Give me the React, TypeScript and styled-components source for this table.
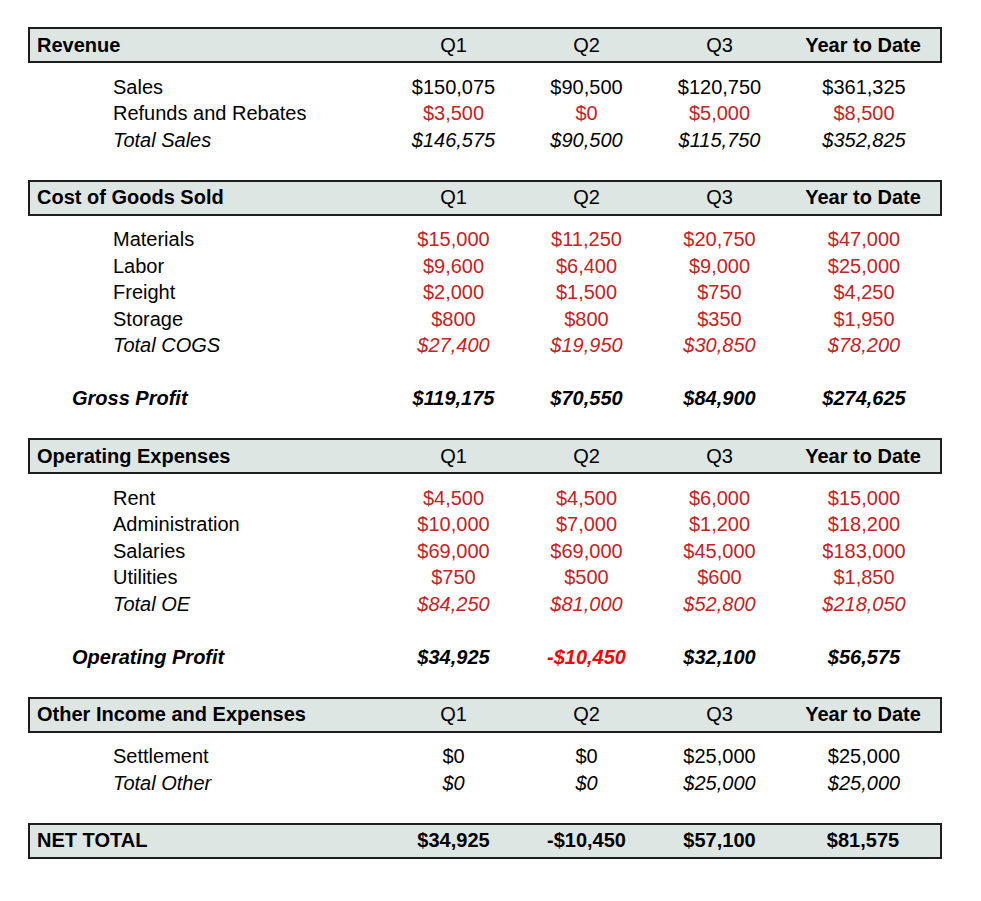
import React from "react";
import styled, { createGlobalStyle, css } from "styled-components";

const Global = createGlobalStyle`
  html, body { margin: 0; padding: 0; background: #ffffff; }
  body { font-family: "Liberation Sans", Arial, sans-serif; color: #000; }
`;

const Sheet = styled.div`
  padding: 27px 0 0 28px;
  width: 914px;
  font-size: 20px;
`;

const Section = styled.section`
  display: flex;
  flex-direction: column;
`;

const cols = css`
  display: grid;
  grid-template-columns: 359px 133px 133px 133px 156px;
  align-items: center;
`;

const HeaderBox = styled.div`
  ${cols}
  grid-template-columns: 357px 133px 133px 133px 154px;
  box-sizing: border-box;
  height: 36px;
  background: #dee6e4;
  border: 2px solid #1e1e1e;
  margin-bottom: 10.5px;
`;

const HeaderLabel = styled.div`
  font-weight: bold;
  padding-left: 7px;
  white-space: nowrap;
`;

const HeaderCell = styled.div<{ $bold?: boolean }>`
  text-align: center;
  font-weight: ${(p) => (p.$bold ? "bold" : "normal")};
  white-space: nowrap;
`;

type Kind = "plain" | "total" | "profit";

const Row = styled.div`
  ${cols}
  height: 26.5px;
  line-height: 26.5px;
`;

const Blank = styled.div`
  height: 26.5px;
`;

const Label = styled.div<{ $kind: Kind }>`
  padding-left: ${(p) => (p.$kind === "profit" ? "44px" : "85px")};
  font-style: ${(p) => (p.$kind === "plain" ? "normal" : "italic")};
  font-weight: ${(p) => (p.$kind === "profit" ? "bold" : "normal")};
  white-space: nowrap;
`;

const Value = styled.div<{ $kind: Kind; $tone: "black" | "red" | "alert" }>`
  text-align: center;
  white-space: nowrap;
  font-style: ${(p) => (p.$kind === "plain" ? "normal" : "italic")};
  font-weight: ${(p) => (p.$kind === "profit" ? "bold" : "normal")};
  color: ${(p) =>
    p.$tone === "red" ? "#c9211e" : p.$tone === "alert" ? "#ff0000" : "#000"};
`;

const NetBox = styled(HeaderBox)`
  margin-bottom: 0;
`;

type RowData = {
  label: string;
  values: string[];
  kind: Kind;
  tone?: "black" | "red";
};

const Header = ({ title }: { title: string }) => (
  <HeaderBox>
    <HeaderLabel>{title}</HeaderLabel>
    <HeaderCell>Q1</HeaderCell>
    <HeaderCell>Q2</HeaderCell>
    <HeaderCell>Q3</HeaderCell>
    <HeaderCell $bold>Year to Date</HeaderCell>
  </HeaderBox>
);

const DataRow = ({ row }: { row: RowData }) => (
  <Row>
    <Label $kind={row.kind}>{row.label}</Label>
    {row.values.map((v, i) => (
      <Value
        key={i}
        $kind={row.kind}
        $tone={
          row.kind === "profit" && v.startsWith("-")
            ? "alert"
            : row.tone === "red"
            ? "red"
            : "black"
        }
      >
        {v}
      </Value>
    ))}
  </Row>
);

const revenue: RowData[] = [
  { label: "Sales", values: ["$150,075", "$90,500", "$120,750", "$361,325"], kind: "plain" },
  { label: "Refunds and Rebates", values: ["$3,500", "$0", "$5,000", "$8,500"], kind: "plain", tone: "red" },
  { label: "Total Sales", values: ["$146,575", "$90,500", "$115,750", "$352,825"], kind: "total" },
];

const cogs: RowData[] = [
  { label: "Materials", values: ["$15,000", "$11,250", "$20,750", "$47,000"], kind: "plain", tone: "red" },
  { label: "Labor", values: ["$9,600", "$6,400", "$9,000", "$25,000"], kind: "plain", tone: "red" },
  { label: "Freight", values: ["$2,000", "$1,500", "$750", "$4,250"], kind: "plain", tone: "red" },
  { label: "Storage", values: ["$800", "$800", "$350", "$1,950"], kind: "plain", tone: "red" },
  { label: "Total COGS", values: ["$27,400", "$19,950", "$30,850", "$78,200"], kind: "total", tone: "red" },
];

const gross: RowData = {
  label: "Gross Profit",
  values: ["$119,175", "$70,550", "$84,900", "$274,625"],
  kind: "profit",
};

const opex: RowData[] = [
  { label: "Rent", values: ["$4,500", "$4,500", "$6,000", "$15,000"], kind: "plain", tone: "red" },
  { label: "Administration", values: ["$10,000", "$7,000", "$1,200", "$18,200"], kind: "plain", tone: "red" },
  { label: "Salaries", values: ["$69,000", "$69,000", "$45,000", "$183,000"], kind: "plain", tone: "red" },
  { label: "Utilities", values: ["$750", "$500", "$600", "$1,850"], kind: "plain", tone: "red" },
  { label: "Total OE", values: ["$84,250", "$81,000", "$52,800", "$218,050"], kind: "total", tone: "red" },
];

const opProfit: RowData = {
  label: "Operating Profit",
  values: ["$34,925", "-$10,450", "$32,100", "$56,575"],
  kind: "profit",
};

const other: RowData[] = [
  { label: "Settlement", values: ["$0", "$0", "$25,000", "$25,000"], kind: "plain" },
  { label: "Total Other", values: ["$0", "$0", "$25,000", "$25,000"], kind: "total" },
];

const netValues = ["$34,925", "-$10,450", "$57,100", "$81,575"];

export default function App() {
  return (
    <>
      <Global />
      <Sheet>
        <Section>
          <Header title="Revenue" />
          {revenue.map((r) => (
            <DataRow key={r.label} row={r} />
          ))}
          <Blank />
        </Section>
        <Section>
          <Header title="Cost of Goods Sold" />
          {cogs.map((r) => (
            <DataRow key={r.label} row={r} />
          ))}
          <Blank />
          <DataRow row={gross} />
          <Blank />
        </Section>
        <Section>
          <Header title="Operating Expenses" />
          {opex.map((r) => (
            <DataRow key={r.label} row={r} />
          ))}
          <Blank />
          <DataRow row={opProfit} />
          <Blank />
        </Section>
        <Section>
          <Header title="Other Income and Expenses" />
          {other.map((r) => (
            <DataRow key={r.label} row={r} />
          ))}
          <Blank />
        </Section>
        <NetBox>
          <HeaderLabel>NET TOTAL</HeaderLabel>
          {netValues.map((v) => (
            <HeaderCell key={v} $bold>
              {v}
            </HeaderCell>
          ))}
        </NetBox>
      </Sheet>
    </>
  );
}
